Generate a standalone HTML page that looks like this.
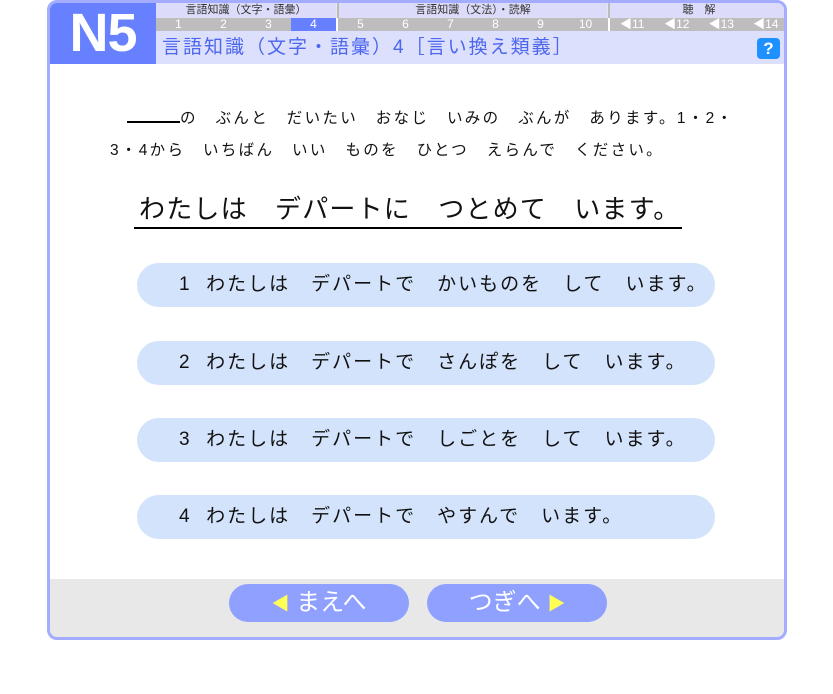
<!DOCTYPE html>
<html><head><meta charset="utf-8"><style>
*{margin:0;padding:0;box-sizing:border-box}
body{width:833px;height:694px;background:#fff;font-family:"Liberation Sans","Noto Sans CJK JP",sans-serif;position:relative;overflow:hidden}
.frame{position:absolute;left:47px;top:0;width:740px;height:640px;border:3px solid #a4acff;border-radius:10px;background:#e8e8e8;overflow:hidden}
.abs{position:absolute}
.n5{left:0;top:0;width:106px;height:61px;background:#6680ff;color:#fff;font-weight:bold;font-size:54px;line-height:61px;text-align:center;letter-spacing:-1px}
.top{top:0;height:15px;background:#dcdcfa;font-size:11px;line-height:15px;text-align:center;color:#333}
.nums{top:15px;height:13px;background:#bdbdbd;display:flex;font-size:12px;line-height:13px;color:#fff}
.nums span{flex:1;text-align:center}
.title{left:106px;top:28px;width:631px;height:33px;background:#dde0fc;color:#4c66f0;font-size:19px;line-height:33px;padding-left:6px;letter-spacing:2px}
.q{right:4px;top:35px;width:23px;height:21px;background:#1e90ff;border-radius:4px;color:#fff;font-weight:bold;font-size:17px;line-height:21px;text-align:center}
.content{left:0;top:61px;width:734px;height:515px;background:#fff}
.ins{font-size:15.5px;color:#111;white-space:pre;letter-spacing:2.3px}
.opt{left:87px;width:578px;height:44px;background:#d3e3fc;border-radius:22px;font-size:19px;line-height:44px;color:#111;padding-left:42px;white-space:pre;letter-spacing:2px}
.btn{top:581px;width:180px;height:38px;background:#8fa0ff;border-radius:19px;color:#fff;font-size:24px;line-height:38px;text-align:center}
</style></head><body>
<div class="frame">
<div class="abs n5">N5</div>
<div class="abs top" style="left:106px;width:180px">言語知識（文字・語彙）</div>
<div class="abs top" style="left:287px;width:270px;border-left:2px solid #bbb">言語知識（文法）・読解</div>
<div class="abs top" style="left:558px;width:180px;border-left:2px solid #bbb">聴　解</div>
<div class="abs nums" style="left:106px;width:180px"><span>1</span><span>2</span><span>3</span><span style="background:#6680ff">4</span></div>
<div class="abs nums" style="left:286px;width:272px;border-left:2px solid #fff"><span>5</span><span>6</span><span>7</span><span>8</span><span>9</span><span>10</span></div>
<div class="abs nums" style="left:558px;width:180px;border-left:2px solid #fff"><span>◀11</span><span>◀12</span><span>◀13</span><span>◀14</span></div>
<div class="abs title">言語知識（文字・語彙）4［言い換え類義］</div>
<div class="abs q">?</div>
<div class="abs content">
<div class="abs ins" style="left:77px;top:42px"><span style="display:inline-block;width:53px;border-bottom:2px solid #000;height:14px;vertical-align:baseline"></span>の　ぶんと　だいたい　おなじ　いみの　ぶんが　あります。1・2・</div>
<div class="abs ins" style="left:60px;top:74px">3・4から　いちばん　いい　ものを　ひとつ　えらんで　ください。</div>
<div class="abs" style="left:84px;top:127px;width:548px;font-size:26px;line-height:36px;border-bottom:2px solid #000;white-space:pre;color:#111;padding-left:5px;letter-spacing:1.2px">わたしは　デパートに　つとめて　います。</div>
<div class="abs opt" style="top:199px">1  わたしは　デパートで　かいものを　して　います。</div>
<div class="abs opt" style="top:277px">2  わたしは　デパートで　さんぽを　して　います。</div>
<div class="abs opt" style="top:354px">3  わたしは　デパートで　しごとを　して　います。</div>
<div class="abs opt" style="top:431px">4  わたしは　デパートで　やすんで　います。</div>
</div>
</div>
<div class="abs btn" style="left:229px;top:584px"><span style="color:#ffff55;font-size:18px">◀</span> まえへ</div>
<div class="abs btn" style="left:427px;top:584px">つぎへ <span style="color:#ffff55;font-size:18px">▶</span></div>
</body></html>
